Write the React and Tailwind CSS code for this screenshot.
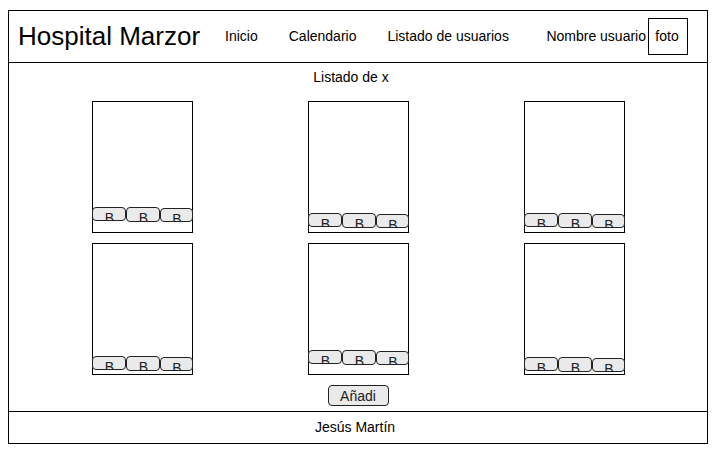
const cards = [
  { id: 1, inset: "pb-[10px]" },
  { id: 2, inset: "pb-1" },
  { id: 3, inset: "pb-1" },
  { id: 4, inset: "pb-[3px]" },
  { id: 5, inset: "pb-[9px]" },
  { id: 6, inset: "pb-[2px]" },
];

function CardButton({ className }) {
  return (
    <button
      type="button"
      className={`flex items-start justify-center overflow-hidden rounded border border-[#222] bg-[#eaeaea] pl-[2px] text-sm text-[#222] ${className}`}
    >
      B
    </button>
  );
}

function Card({ inset }) {
  return (
    <article className={`flex h-[132px] w-[101px] items-end border border-black ${inset}`}>
      <div className="-mx-px flex h-[15px] flex-1 items-start">
        <CardButton className="h-[14px] w-[34px]" />
        <CardButton className="h-[15px] w-[34px]" />
        <CardButton className="mt-px h-[14px] w-[33px]" />
      </div>
    </article>
  );
}

export default function App() {
  return (
    <div className="bg-white px-2 pt-[10px] pr-[10px] pb-[10px] font-['Liberation_Sans',Arial,sans-serif] text-sm text-black">
      <div className="border border-black">
        <header className="flex h-[52px] items-center border-b border-black pr-[19px] pl-[9px]">
          <h1 className="pb-[2px] text-[26px] leading-8 whitespace-nowrap">Hospital Marzor</h1>
          <nav className="ml-[25px] flex items-center gap-[31px] pb-[2px] whitespace-nowrap">
            <a href="#inicio">Inicio</a>
            <a href="#calendario">Calendario</a>
            <a href="#usuarios">Listado de usuarios</a>
          </nav>
          <div className="ml-auto flex items-center gap-[2px] whitespace-nowrap">
            <span className="pb-[2px]">Nombre usuario</span>
            <div className="flex h-[37px] w-10 items-center justify-center border border-black pr-[2px] pb-[2px]">foto</div>
          </div>
        </header>

        <main className="flex flex-col pt-1">
          <h2 className="pr-[14px] text-center">Listado de x</h2>
          <section className="mt-[14px] grid grid-cols-3 justify-items-center gap-y-[10px] px-[25px]">
            {cards.map((card) => (
              <Card key={card.id} inset={card.inset} />
            ))}
          </section>
          <button
            type="button"
            className="mt-[10px] mb-[5px] h-[21px] w-[61px] self-center rounded border border-[#222] bg-[#eaeaea] leading-5 text-[#222]"
          >
            Añadi
          </button>
        </main>

        <footer className="flex h-8 items-center justify-center border-t border-black pr-[6px] pb-[2px]">
          Jesús Martín
        </footer>
      </div>
    </div>
  );
}
